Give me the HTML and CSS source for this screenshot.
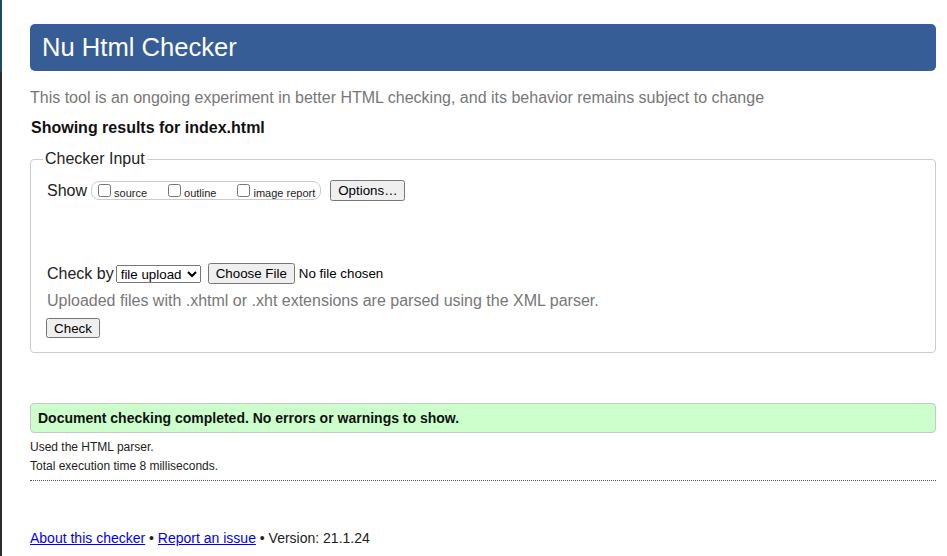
FILE: index.html
```html
<!DOCTYPE html>
<html lang="en">
<head>
<meta charset="utf-8">
<title>Nu Html Checker</title>
<link rel="stylesheet" href="styles.css">
</head>
<body>
<div class="edge"><div class="edge-top"></div><div class="edge-bottom"></div></div>
<div class="page">
  <h1 class="title">Nu Html Checker</h1>
  <p class="intro">This tool is an ongoing experiment in better HTML checking, and its behavior remains subject to change</p>
  <p class="showing">Showing results for index.html</p>
  <fieldset class="input">
    <legend class="legend">Checker Input</legend>
    <div class="row show-row">
      <span class="label">Show</span>
      <span class="pill">
        <label class="opt"><input type="checkbox" class="cb"><span>source</span></label>
        <label class="opt"><input type="checkbox" class="cb"><span>outline</span></label>
        <label class="opt"><input type="checkbox" class="cb"><span>image report</span></label>
      </span>
      <button class="btn options">Options…</button>
    </div>
    <div class="row check-row">
      <span class="label">Check by</span>
      <select class="sel"><option>file upload</option></select>
      <input type="file" class="file">
    </div>
    <p class="note">Uploaded files with .xhtml or .xht extensions are parsed using the XML parser.</p>
    <button class="btn check">Check</button>
  </fieldset>
  <div class="results">
    <div class="success">Document checking completed. No errors or warnings to show.</div>
    <p class="meta">Used the HTML parser.</p>
    <p class="meta">Total execution time 8 milliseconds.</p>
  </div>
  <p class="footer"><a href="#">About this checker</a> • <a href="#">Report an issue</a> • Version: 21.1.24</p>
</div>
</body>
</html>
```
FILE: styles.css
```css
html, body {
  margin: 0;
  padding: 0;
  background: #fff;
}
body {
  display: flex;
  min-height: 556px;
  font-family: "Liberation Sans", Arial, sans-serif;
  color: #222;
}
.edge {
  width: 2px;
  flex: none;
  display: flex;
  flex-direction: column;
}
.edge-top {
  height: 72px;
  background: #1d4a6c;
}
.edge-bottom {
  flex: 1;
  background: #2b2b2b;
}
.page {
  width: 906px;
  padding: 24px 0 0 28px;
}
.title {
  margin: 0 0 18px;
  height: 47px;
  line-height: 47px;
  padding: 0 12px;
  background: #365d95;
  color: #fff;
  font-size: 25.6px;
  font-weight: normal;
  border-radius: 5px;
}
.intro {
  margin: 0 0 12px;
  font-size: 16px;
  line-height: 18px;
  color: #777;
}
.showing {
  margin: 0 0 13px 1px;
  font-size: 16px;
  line-height: 18px;
  font-weight: bold;
  color: #111;
}
.input {
  margin: 0;
  padding: 12px 16px 14px;
  border: 1px solid #ccc;
  border-radius: 4px;
}
.legend {
  margin-left: -4px;
  padding: 0 2px;
  font-size: 16px;
  line-height: 18px;
  color: #222;
}
.row {
  display: flex;
  align-items: center;
}
.label {
  font-size: 16px;
  line-height: 18px;
}
.show-row {
  height: 21px;
}
.pill {
  display: inline-flex;
  align-items: center;
  height: 17px;
  margin-left: 4px;
  padding: 0 5px 0 2px;
  border: 1px solid #ccc;
  border-radius: 8px;
}
.opt {
  display: inline-flex;
  align-items: center;
  font-size: 11px;
  margin-right: 17px;
}
.opt:last-child {
  margin-right: 0;
}
.opt span {
  position: relative;
  top: 2px;
}
.cb {
  margin: 0 3px 0 4px;
  width: 13px;
  height: 13px;
}
.btn {
  font-family: "Liberation Sans", Arial, sans-serif;
  font-size: 13.33px;
  color: #000;
  padding: 1px 6px;
}
.options {
  margin-left: 9px;
  height: 21px;
  width: 75px;
}
.check-row {
  margin-top: 62px;
  height: 21px;
}
.sel {
  margin-left: 2px;
  height: 18px;
  width: 85px;
  font-family: "Liberation Sans", Arial, sans-serif;
  font-size: 13.33px;
  padding: 0;
  color: #000;
}
.file {
  margin-left: 7px;
  font-family: "Liberation Sans", Arial, sans-serif;
  font-size: 13.33px;
  color: #000;
}
.note {
  margin: 8px 0 0;
  font-size: 16px;
  line-height: 18px;
  color: #777;
}
.check {
  display: block;
  margin: 8px 0 0 -1px;
  height: 20px;
  width: 54px;
}
.results {
  margin-top: 50px;
  padding-bottom: 7px;
  border-bottom: 1px dotted #555;
}
.success {
  height: 28px;
  line-height: 28px;
  padding: 0 7px;
  background: #ccffcc;
  border: 1px solid #c8c8c8;
  border-radius: 4px;
  font-size: 14px;
  font-weight: bold;
  color: #111;
}
.meta {
  margin: 5px 0 0;
  font-size: 12px;
  line-height: 14px;
  color: #222;
}
.meta + .meta {
  margin-top: 5px;
}
.success + .meta {
  margin-top: 7px;
}
.footer {
  margin: 49px 0 0;
  font-size: 14px;
  line-height: 16px;
  color: #222;
}
.footer a {
  color: #00e;
}
```
